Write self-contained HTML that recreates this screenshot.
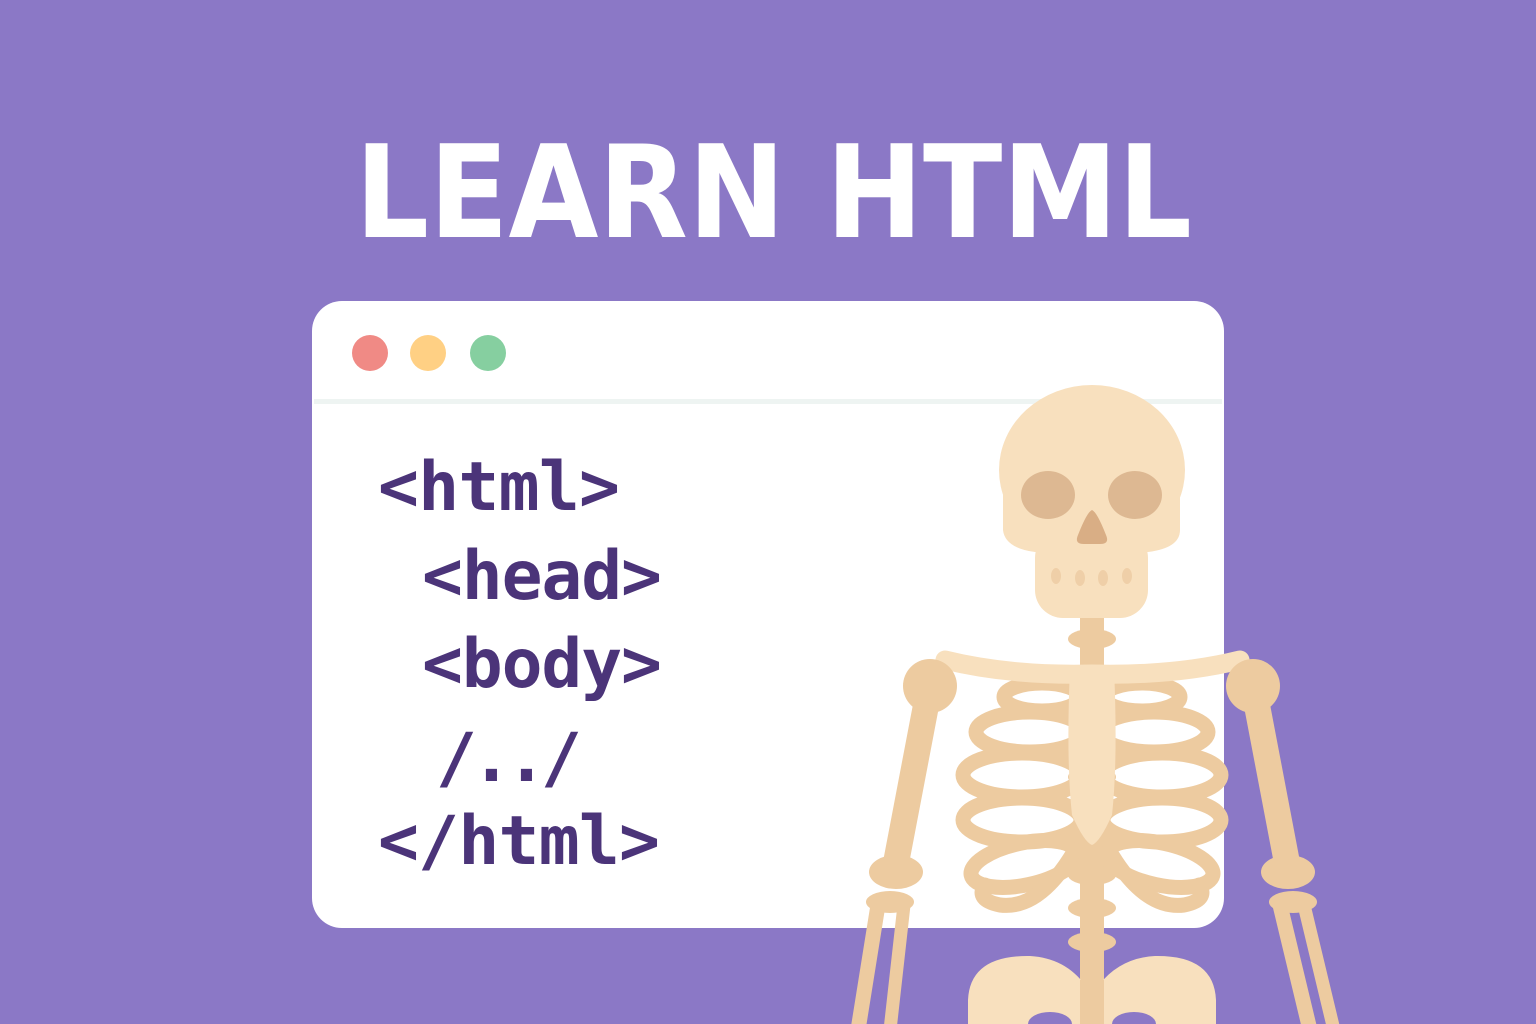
<!DOCTYPE html>
<html><head><meta charset="utf-8"><style>
html,body{margin:0;padding:0;width:1536px;height:1024px;overflow:hidden;background:#8B78C6}
svg{display:block}
</style></head><body>
<svg width="1536" height="1024" viewBox="0 0 1536 1024" xmlns="http://www.w3.org/2000/svg">
<rect width="1536" height="1024" fill="#8B78C6"/>
<text x="355" y="237" font-family="DejaVu Sans, Liberation Sans, sans-serif" font-weight="bold" font-size="128" fill="#fff" textLength="837" lengthAdjust="spacingAndGlyphs">LEARN HTML</text>
<rect x="312" y="301" width="912" height="627" rx="30" fill="#fff"/>
<rect x="314" y="399" width="908" height="5" fill="#EEF4F2"/>
<circle cx="370" cy="353" r="18" fill="#F08A85"/>
<circle cx="428" cy="353" r="18" fill="#FFD084"/>
<circle cx="488" cy="353" r="18" fill="#86CFA0"/>
<g font-family="DejaVu Sans Mono, Liberation Mono, monospace" font-weight="bold" font-size="68" fill="#4B3479" lengthAdjust="spacingAndGlyphs">
<text x="378" y="510" textLength="242">&lt;html&gt;</text>
<text x="422" y="599" textLength="240">&lt;head&gt;</text>
<text x="422" y="687" textLength="240">&lt;body&gt;</text>
<text x="436" y="781" textLength="146">/../</text>
<text x="378" y="864" textLength="282">&lt;/html&gt;</text>
</g>
<g stroke-linecap="round">
<line x1="928" y1="695" x2="895" y2="868" stroke="#EDCBA0" stroke-width="26"/>
<ellipse cx="896" cy="872" rx="27" ry="17" fill="#EDCBA0"/>
<line x1="1255" y1="695" x2="1288" y2="868" stroke="#EDCBA0" stroke-width="26"/>
<ellipse cx="1288" cy="872" rx="27" ry="17" fill="#EDCBA0"/>
<line x1="878" y1="905" x2="858" y2="1030" stroke="#EDCBA0" stroke-width="15"/>
<line x1="904" y1="905" x2="890" y2="1030" stroke="#EDCBA0" stroke-width="13"/>
<line x1="1280" y1="905" x2="1310" y2="1030" stroke="#EDCBA0" stroke-width="15"/>
<line x1="1304" y1="905" x2="1334" y2="1030" stroke="#EDCBA0" stroke-width="13"/>
<ellipse cx="890" cy="902" rx="24" ry="11" fill="#EDCBA0"/>
<ellipse cx="1293" cy="902" rx="24" ry="11" fill="#EDCBA0"/>
<rect x="1080" y="610" width="24" height="420" fill="#EDCBA0"/>
<ellipse cx="1092" cy="639" rx="24" ry="10" fill="#EDCBA0"/>
<ellipse cx="1092" cy="777" rx="24" ry="10" fill="#EDCBA0"/>
<ellipse cx="1092" cy="808" rx="24" ry="10" fill="#EDCBA0"/>
<ellipse cx="1092" cy="840" rx="24" ry="10" fill="#EDCBA0"/>
<ellipse cx="1092" cy="875" rx="24" ry="10" fill="#EDCBA0"/>
<ellipse cx="1092" cy="908" rx="24" ry="10" fill="#EDCBA0"/>
<ellipse cx="1092" cy="942" rx="24" ry="10" fill="#EDCBA0"/>
<g fill="none" stroke="#EDCBA0" stroke-width="15">
<ellipse cx="1042" cy="697" rx="38" ry="14"/>
<ellipse cx="1030" cy="732" rx="54" ry="20"/>
<ellipse cx="1022" cy="775" rx="59" ry="22"/>
<ellipse cx="1022" cy="820" rx="59" ry="22"/>
<ellipse cx="1024" cy="864" rx="54" ry="21" transform="rotate(-12 1024 864)"/>
<path d="M1075 850 Q1040 910 1000 905 Q975 900 985 885"/>
<ellipse cx="1142" cy="697" rx="38" ry="14"/>
<ellipse cx="1154" cy="732" rx="54" ry="20"/>
<ellipse cx="1162" cy="775" rx="59" ry="22"/>
<ellipse cx="1162" cy="820" rx="59" ry="22"/>
<ellipse cx="1160" cy="864" rx="54" ry="21" transform="rotate(12 1160 864)"/>
<path d="M1109 850 Q1144 910 1184 905 Q1209 900 1199 885"/>
</g>
<path d="M1070 668 L1114 668 Q1118 760 1112 815 Q1100 842 1092 845 Q1084 842 1072 815 Q1066 760 1070 668Z" fill="#F8E0BE"/>
<path d="M945 660 Q1010 676 1092 674 Q1175 676 1240 660" fill="none" stroke="#F8E0BE" stroke-width="19"/>
<circle cx="930" cy="686" r="27" fill="#EDCBA0"/>
<circle cx="1253" cy="686" r="27" fill="#EDCBA0"/>
<path d="M968 1000 Q970 955 1030 956 Q1065 958 1085 985 L1099 985 Q1120 958 1155 956 Q1214 955 1216 1000 L1216 1030 L968 1030Z" fill="#F8E0BE"/>
<ellipse cx="1050" cy="1024" rx="22" ry="12" fill="#8B78C6"/>
<ellipse cx="1134" cy="1024" rx="22" ry="12" fill="#8B78C6"/>
<rect x="1080" y="980" width="24" height="50" fill="#EDCBA0"/>
<ellipse cx="1092" cy="470" rx="93" ry="85" fill="#F8E0BE"/>
<path d="M1003 480 L1003 530 Q1005 548 1035 552 L1148 552 Q1180 548 1180 530 L1180 480Z" fill="#F8E0BE"/>
<rect x="1035" y="530" width="113" height="88" rx="28" fill="#F8E0BE"/>
<ellipse cx="1048" cy="495" rx="27" ry="24" fill="#DDB892"/>
<ellipse cx="1135" cy="495" rx="27" ry="24" fill="#DDB892"/>
<path d="M1092 510 Q1097 512 1106 535 Q1110 544 1100 544 L1084 544 Q1074 544 1078 535 Q1087 512 1092 510Z" fill="#D9AE85"/>
<ellipse cx="1056" cy="576" rx="5" ry="8" fill="#EFCFA8"/>
<ellipse cx="1080" cy="578" rx="5" ry="8" fill="#EFCFA8"/>
<ellipse cx="1103" cy="578" rx="5" ry="8" fill="#EFCFA8"/>
<ellipse cx="1127" cy="576" rx="5" ry="8" fill="#EFCFA8"/>
</g>
</svg>
</body></html>
